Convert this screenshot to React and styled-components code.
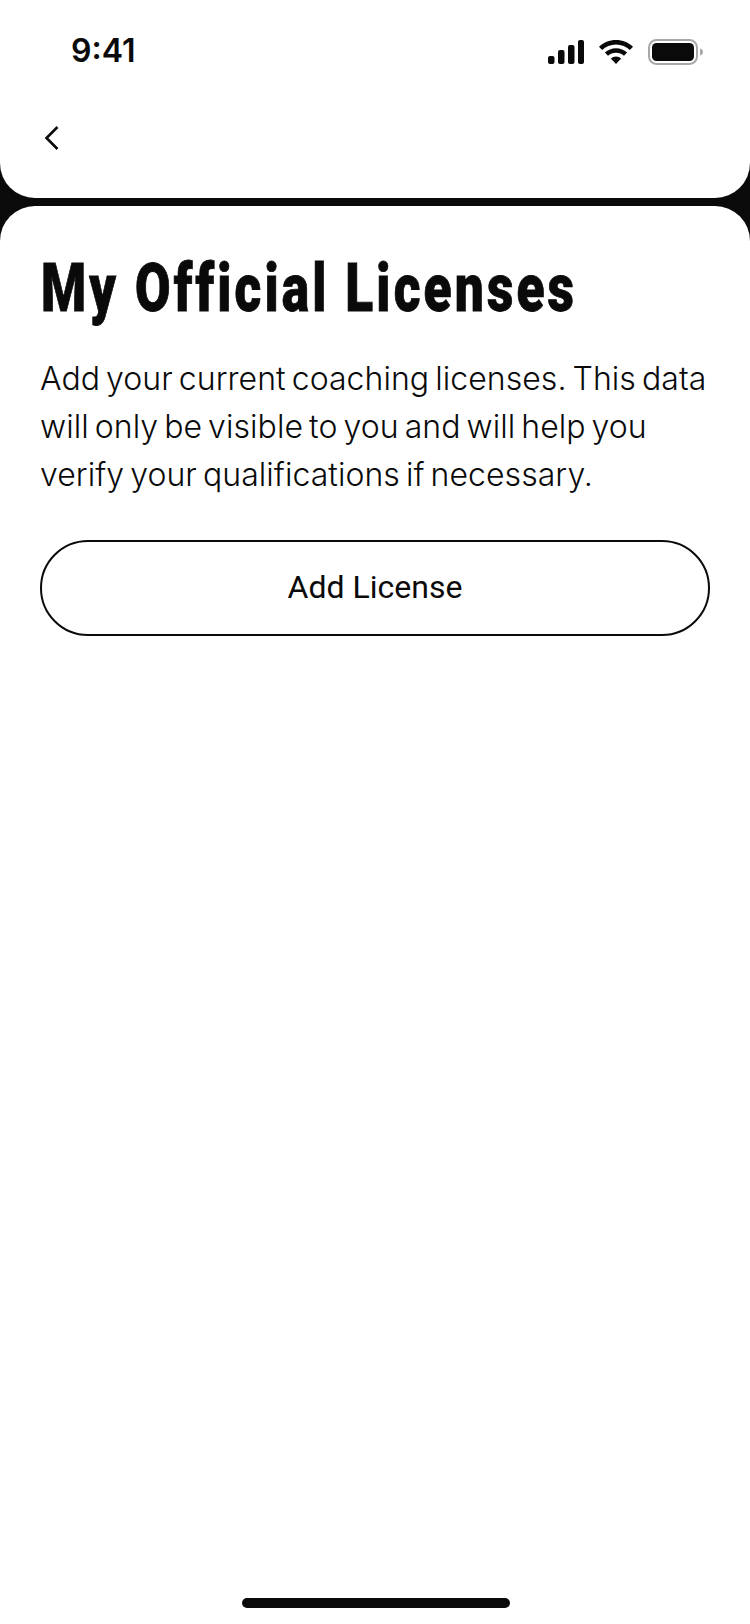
import React from "react";
import styled, { createGlobalStyle } from "styled-components";

const INK = "#0a0a0a";

const Global = createGlobalStyle`
  html, body { margin: 0; padding: 0; background: ${INK}; }
  * { box-sizing: border-box; }
`;

const Screen = styled.div`
  width: 750px;
  height: 1624px;
  display: flex;
  flex-direction: column;
  gap: 8px;
  background: ${INK};
  overflow: hidden;
`;

const TopCard = styled.header`
  height: 198px;
  flex: none;
  background: #fff;
  border-radius: 0 0 35px 35px;
  padding: 32px 47px 0 71px;
`;

const StatusBar = styled.div`
  height: 38px;
  display: flex;
  align-items: center;
  justify-content: space-between;
`;

const Clock = styled.span`
  font: 600 32px/38px Inter, "Liberation Sans", sans-serif;
  color: ${INK};
`;

const StatusIcons = styled.div`
  display: flex;
  align-items: center;
  gap: 15px;
  padding-top: 2px;
`;

const BackButton = styled.button`
  display: block;
  margin: 55px 0 0 -27px;
  padding: 0;
  width: 15px;
  height: 26px;
  border: 0;
  background: none;
`;

const MainCard = styled.main`
  flex: 1;
  background: #fff;
  border-radius: 35px 35px 0 0;
  padding: 43px 40px 16px;
  display: flex;
  flex-direction: column;
`;

const Title = styled.h1`
  margin: 0 0 0 1px;
  font: 900 66px/80px Roboto, sans-serif;
  color: ${INK};
  white-space: nowrap;
  letter-spacing: 4px;
  -webkit-text-stroke: 0.8px ${INK};
  transform: scaleX(0.78);
  transform-origin: left center;
`;

const Body = styled.p`
  margin: 26px 0 0;
  font: 350 32px/48px Inter, sans-serif;
  letter-spacing: 0.05px;
  word-spacing: -3px;
  color: ${INK};
  width: 680px;
`;

const OutlineButton = styled.button`
  margin-top: 41px;
  height: 96px;
  width: 670px;
  padding: 0 0 2px;
  border: 2px solid ${INK};
  border-radius: 48px;
  background: #fff;
  font: 400 32px Roboto, sans-serif;
  color: ${INK};
`;

const HomeBar = styled.div`
  margin: auto 0 0 2px;
  align-self: center;
  width: 268px;
  height: 10px;
  border-radius: 5px;
  background: ${INK};
`;

const Signal = () => (
  <svg width="36" height="24" viewBox="0 0 36 24" fill={INK} aria-hidden="true">
    <rect x="0" y="16" width="6.5" height="8" rx="2" />
    <rect x="10" y="10" width="6.5" height="14" rx="2" />
    <rect x="20" y="5" width="6.5" height="19" rx="2" />
    <rect x="30" y="0" width="6" height="24" rx="2" />
  </svg>
);

const Wifi = () => (
  <svg width="34" height="24" viewBox="0 0 34 24" fill={INK} aria-hidden="true">
    <path d="M17 0C23.6 0 29.6 2.6 34 6.8L30.9 10C27.3 6.5 22.4 4.4 17 4.4S6.7 6.5 3.1 10L0 6.8C4.4 2.6 10.400 0 17 0Z" />
    <path d="M17 8.200C21.300 8.200 25.200 9.900 28.100 12.600L25 15.800C22.900 13.900 20.100 12.700 17 12.700S11.100 13.900 9 15.800L5.900 12.600C8.800 9.900 12.700 8.200 17 8.200Z" />
    <path d="M17 16.500C19 16.500 20.800 17.200 22.200 18.500L17 24L11.800 18.500C13.200 17.200 15 16.500 17 16.500Z" />
  </svg>
);

const Battery = () => (
  <svg width="55" height="26" viewBox="0 0 55 26" aria-hidden="true">
    <rect x="1" y="1" width="48" height="24" rx="7.500" fill="none" stroke="#a8a8a8" strokeWidth="2" />
    <rect x="4" y="4" width="42" height="18" rx="4.500" fill={INK} />
    <path d="M52 9.500C53.800 10 55 11.300 55 13S53.800 16 52 16.500Z" fill="#a8a8a8" />
  </svg>
);

const Chevron = () => (
  <svg width="15" height="26" viewBox="0 0 15 26" fill="none" aria-hidden="true">
    <path d="M13.500 2L2.500 13L13.500 24" stroke={INK} strokeWidth="2.600" />
  </svg>
);

export default function App() {
  return (
    <Screen>
      <Global />
      <TopCard>
        <StatusBar>
          <Clock>9:41</Clock>
          <StatusIcons>
            <Signal />
            <Wifi />
            <Battery />
          </StatusIcons>
        </StatusBar>
        <BackButton aria-label="Back">
          <Chevron />
        </BackButton>
      </TopCard>
      <MainCard>
        <Title>My Official Licenses</Title>
        <Body>
          Add your current coaching licenses. This data will only be visible to you and will help you
          verify your qualifications if necessary.
        </Body>
        <OutlineButton>Add License</OutlineButton>
        <HomeBar />
      </MainCard>
    </Screen>
  );
}
